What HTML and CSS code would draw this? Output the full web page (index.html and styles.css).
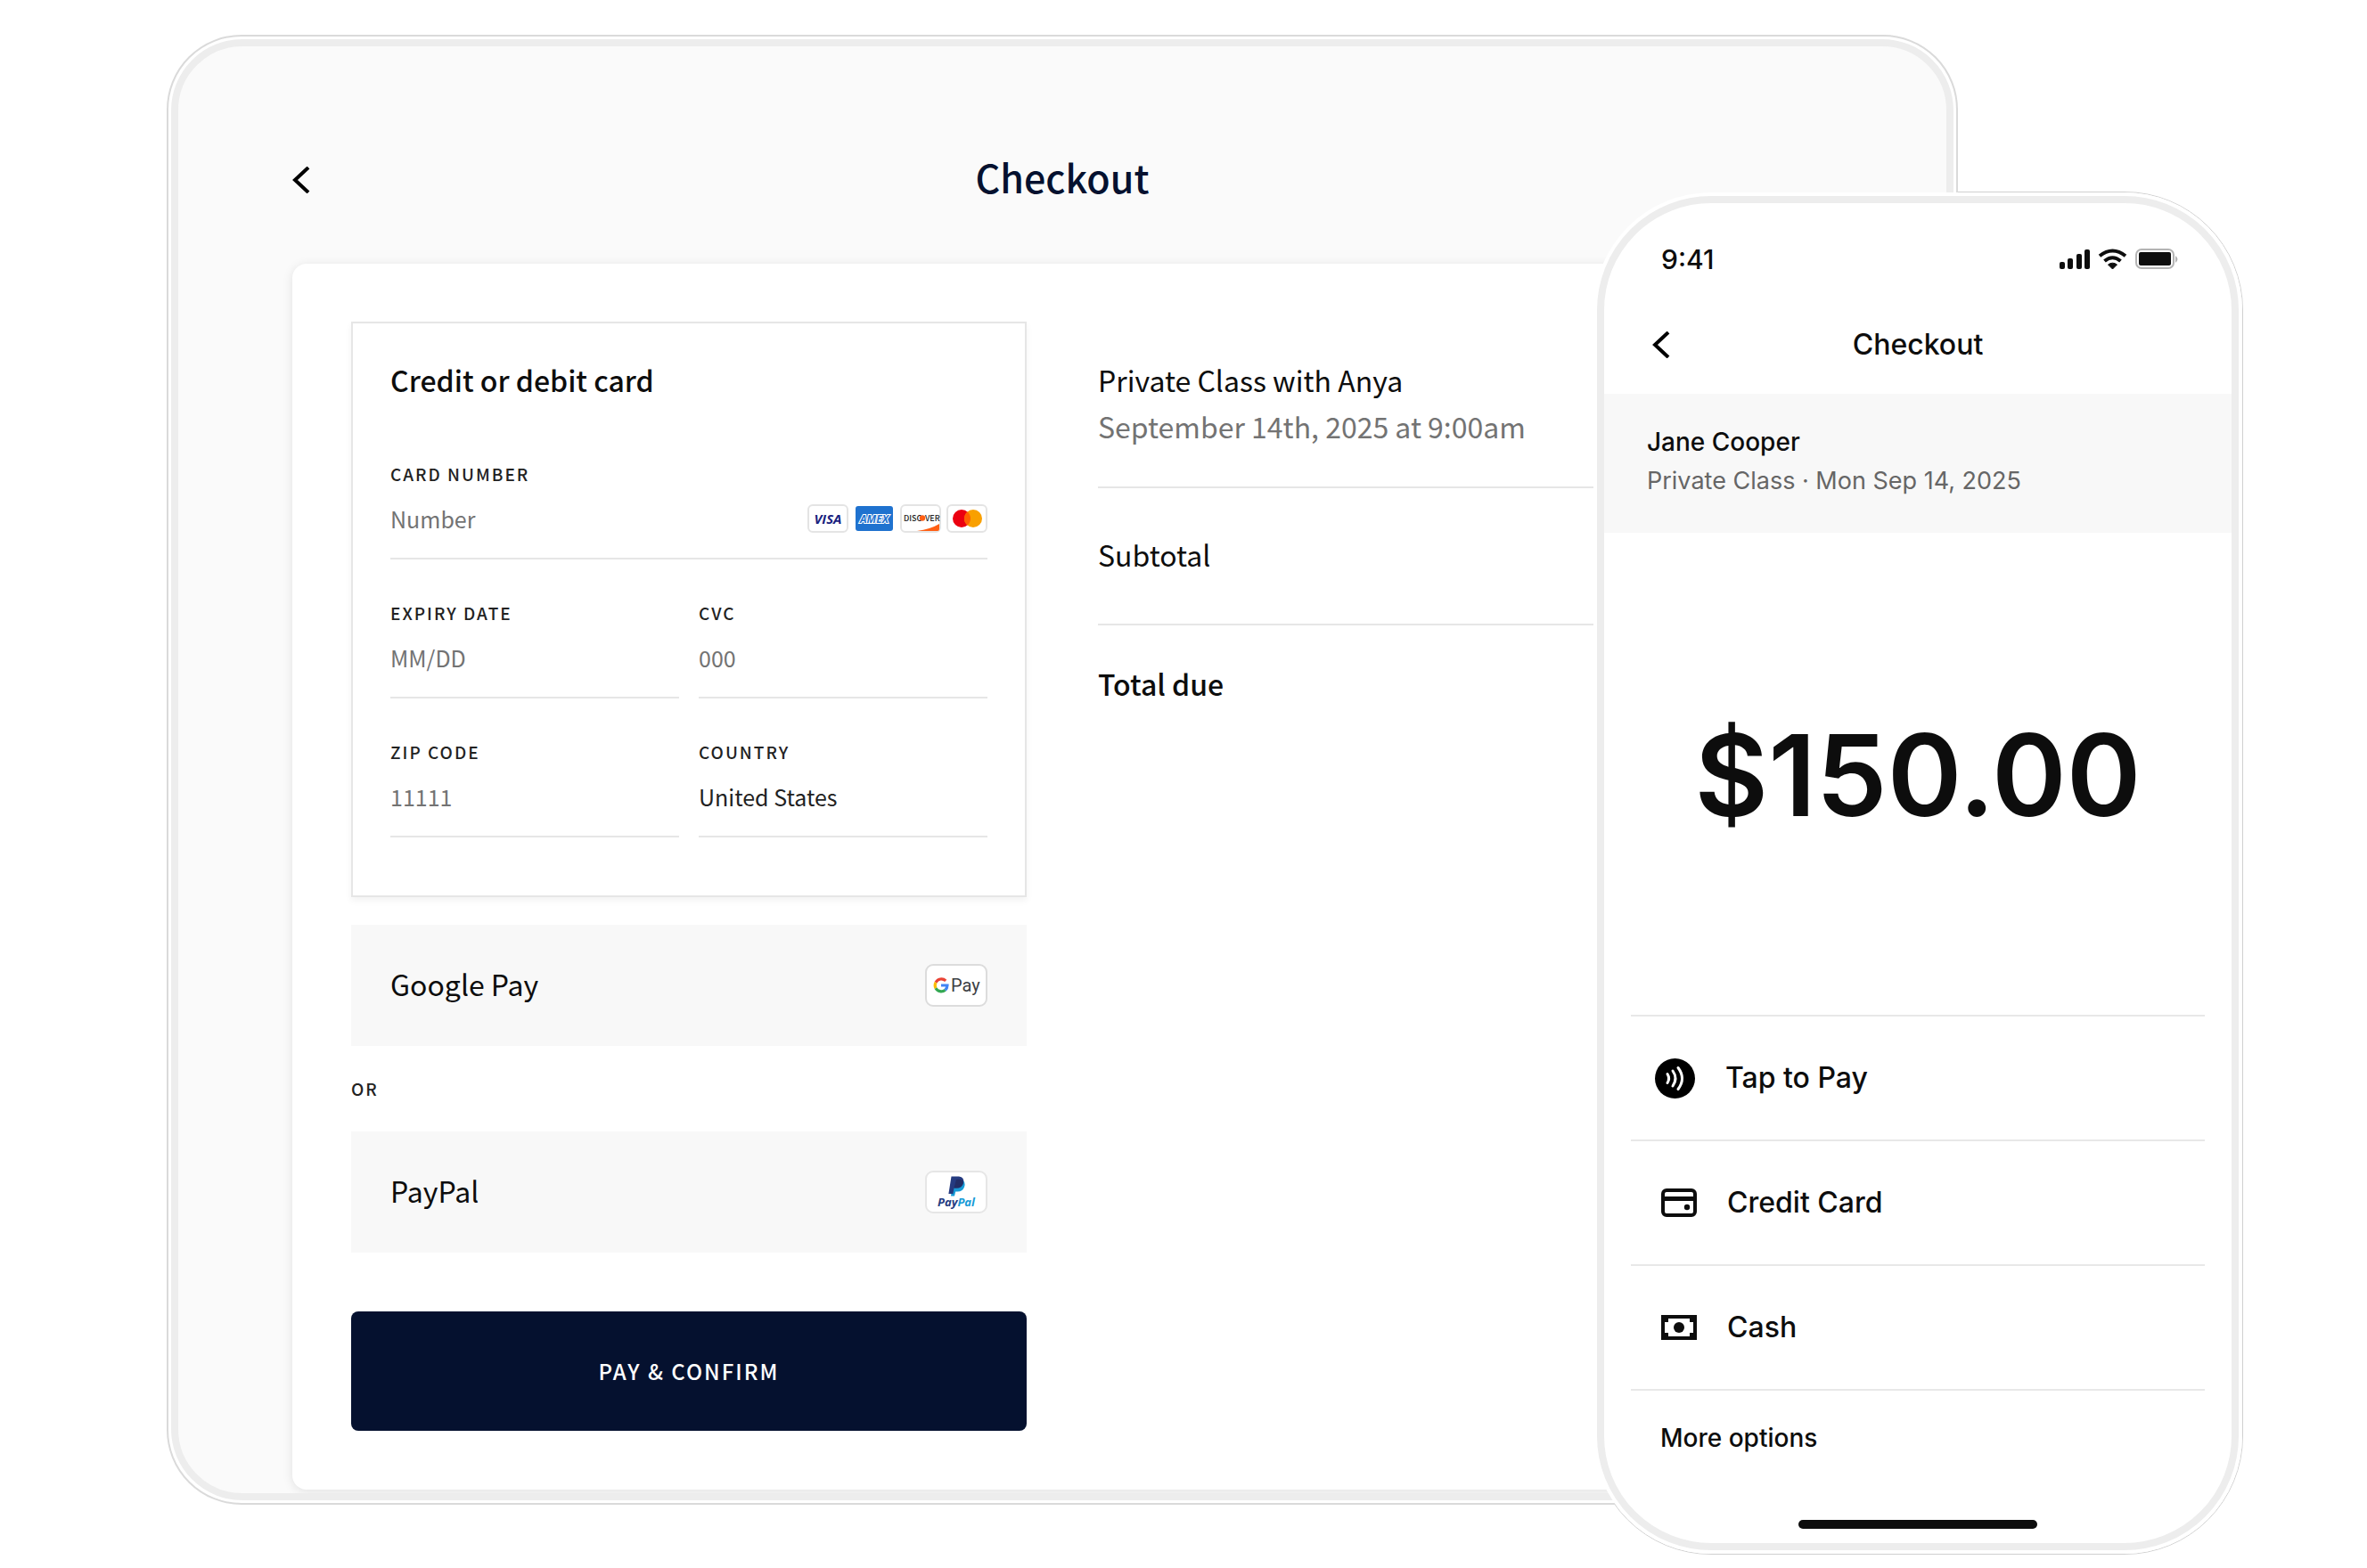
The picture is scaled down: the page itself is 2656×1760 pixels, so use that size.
FILE: index.html
```html
<!DOCTYPE html>
<html lang="en">
<head>
<meta charset="utf-8">
<meta name="viewport" content="width=device-width, initial-scale=1">
<title>Checkout</title>
<link rel="stylesheet" href="styles.css">
</head>
<body>
<main class="scene">
  <section class="tablet" aria-label="Tablet checkout">
    <div class="tablet-screen">
      <header class="tablet-header">
        <button class="back" type="button" aria-label="Back">
          <svg width="20" height="30" viewBox="0 0 20 30"><path d="M18 1 3 15l15 14" fill="none" stroke="#000" stroke-width="4"/></svg>
        </button>
        <h1 class="tablet-title">Checkout</h1>
      </header>
      <form class="card">
        <div class="payment">
          <fieldset class="card-form">
            <legend class="card-form-title">Credit or debit card</legend>
            <div class="fields">
              <div class="field field-wide">
                <label class="label" for="number">CARD NUMBER</label>
                <div class="control">
                  <input class="input" id="number" type="text" placeholder="Number">
                  <span class="brands">
                    <svg width="46" height="32" viewBox="0 0 46 32" role="img" aria-label="Visa"><rect x="1" y="1" width="44" height="30" rx="5" fill="#fff" stroke="#e4e4e4" stroke-width="2"/><text x="23" y="22" class="logo-visa" text-anchor="middle">VISA</text></svg>
                    <svg width="46" height="32" viewBox="0 0 46 32" role="img" aria-label="American Express"><rect x="2" y="2" width="42" height="28" rx="3" fill="#1f72cf"/><text x="23" y="21" class="logo-amex" text-anchor="middle">AMEX</text></svg>
                    <svg width="46" height="32" viewBox="0 0 46 32" role="img" aria-label="Discover"><rect x="1" y="1" width="44" height="30" rx="5" fill="#fff" stroke="#e4e4e4" stroke-width="2"/><path d="M19 30Q34 28 44 22v6q0 2-2 2z" fill="#ff5f14"/><text x="4" y="19" class="logo-discover">DISC</text><circle cx="25" cy="15.500" r="3.200" fill="#ff5f14"/><text x="28" y="19" class="logo-discover">VER</text></svg>
                    <svg width="46" height="32" viewBox="0 0 46 32" role="img" aria-label="Mastercard"><rect x="1" y="1" width="44" height="30" rx="5" fill="#fff" stroke="#e4e4e4" stroke-width="2"/><circle cx="17" cy="16" r="10" fill="#eb0010"/><circle cx="30" cy="16" r="10" fill="#f9a000"/><path d="M23.500 8.400a10 10 0 0 1 0 15.200a10 10 0 0 1 0-15.200z" fill="#ff6000"/></svg>
                  </span>
                </div>
              </div>
              <div class="field">
                <label class="label" for="expiry">EXPIRY DATE</label>
                <div class="control"><input class="input" id="expiry" type="text" placeholder="MM/DD"></div>
              </div>
              <div class="field">
                <label class="label" for="cvc">CVC</label>
                <div class="control"><input class="input" id="cvc" type="text" placeholder="000"></div>
              </div>
              <div class="field">
                <label class="label" for="zip">ZIP CODE</label>
                <div class="control"><input class="input" id="zip" type="text" placeholder="11111"></div>
              </div>
              <div class="field">
                <label class="label" for="country">COUNTRY</label>
                <div class="control"><select class="input" id="country"><option>United States</option></select></div>
              </div>
            </div>
          </fieldset>
          <button class="option" type="button">
            <span class="option-name">Google Pay</span>
            <svg width="70" height="48" viewBox="0 0 70 48" aria-hidden="true">
              <rect x="1" y="1" width="68" height="46" rx="8" fill="#fff" stroke="#dcdcdc" stroke-width="2"/>
              <g fill="none" stroke-width="3.200">
                <path d="M23.200 18.900A7 7 0 0 0 12 20.800" stroke="#ea4335"/>
                <path d="M12 20.800a7 7 0 0 0 0 6.400" stroke="#fbbc04"/>
                <path d="M12 27.200a7 7 0 0 0 10.600 2" stroke="#34a853"/>
                <path d="M22.600 29.200a7 7 0 0 0 2.400-5.200h-7" stroke="#4285f4"/>
              </g>
              <text x="29" y="31" class="logo-gpay">Pay</text>
            </svg>
          </button>
          <p class="or">OR</p>
          <button class="option" type="button">
            <span class="option-name">PayPal</span>
            <svg width="70" height="48" viewBox="0 0 70 48" aria-hidden="true">
              <rect x="1" y="1" width="68" height="46" rx="8" fill="#fff" stroke="#e6e6e6" stroke-width="2"/>
              <path d="M31.500 10H41q5 2 3 8.500-2 5-7.500 5h-2.300L33 28.500h-4z" fill="#179bd7"/>
              <path d="M29.500 6.500H38q6.500.500 5 7.500-1.500 5.500-7.500 5.500h-3L31.400 26h-5z" fill="#253b80"/>
              <path d="M35 10q8-1 8 3.500-1.500 6-7.500 6h-3z" fill="#222d65"/>
              <text x="14" y="40" class="logo-paypal"><tspan fill="#253b80">Pay</tspan><tspan fill="#179bd7">Pal</tspan></text>
            </svg>
          </button>
          <button class="confirm" type="submit">PAY &amp; CONFIRM</button>
        </div>
        <div class="summary">
          <div class="summary-row summary-item">
            <p>Private Class with Anya</p>
            <p class="muted">September 14th, 2025 at 9:00am</p>
          </div>
          <p class="summary-row summary-subtotal">Subtotal</p>
          <p class="summary-total">Total due</p>
        </div>
      </form>
    </div>
  </section>

  <section class="phone" aria-label="Phone checkout">
    <div class="phone-screen">
      <div class="status">
        <span>9:41</span>
        <svg width="136" height="24" viewBox="0 0 136 24" aria-hidden="true">
          <g fill="#0d0d0d">
            <rect x="1" y="15" width="6" height="8" rx="2"/><rect x="10" y="11" width="6" height="12" rx="2"/><rect x="20" y="6" width="6" height="17" rx="2"/><rect x="29" y="1" width="6" height="22" rx="2"/>
            <path d="M60.500 23l-5-5q5-3.600 10 0z" stroke="#0d0d0d" stroke-linejoin="round"/>
            <rect x="90" y="4" width="36" height="15" rx="2"/>
          </g>
          <path d="M46 8.200q14.500-11.500 29 0M51.500 14q9-7.600 18 0" fill="none" stroke="#0d0d0d" stroke-width="4"/>
          <rect x="87" y="1" width="42" height="21" rx="6" fill="none" stroke="#b4b4b4" stroke-width="2"/>
          <path d="M131 8q5 4 0 8z" fill="#b4b4b4"/>
        </svg>
      </div>
      <header class="phone-header">
        <button class="back" type="button" aria-label="Back">
          <svg width="20" height="30" viewBox="0 0 20 30"><path d="M18 1 3 15l15 14" fill="none" stroke="#000" stroke-width="4"/></svg>
        </button>
        <h2 class="phone-title">Checkout</h2>
      </header>
      <div class="client">
        <p class="client-name">Jane Cooper</p>
        <p class="client-info">Private Class · Mon Sep 14, 2025</p>
      </div>
      <p class="amount">$150.00</p>
      <ul class="methods">
        <li><button class="method method-tap" type="button">
          <svg width="45" height="45" viewBox="0 0 45 45" aria-hidden="true"><circle cx="22.500" cy="22.500" r="22.500" fill="#000"/><path d="M14 17.500q3.200 5 0 10M20 14q6 8.500 0 17M26 10.500q9 12 0 24" fill="none" stroke="#fff" stroke-width="3" stroke-linecap="round"/></svg>
          Tap to Pay</button></li>
        <li><button class="method" type="button">
          <svg width="40" height="32" viewBox="0 0 40 32" aria-hidden="true"><rect x="2" y="2" width="36" height="28" rx="4" fill="none" stroke="#0d0d0d" stroke-width="4"/><path d="M2 11.500h36" stroke="#0d0d0d" stroke-width="5"/><circle cx="29" cy="21" r="3.200" fill="#0d0d0d"/></svg>
          Credit Card</button></li>
        <li><button class="method" type="button">
          <svg width="40" height="28" viewBox="0 0 40 28" aria-hidden="true"><path d="M0 0h40v28H0zM8 4v4H4v12h4v4h24v-4h4V8h-4V4z" fill="#0d0d0d" fill-rule="evenodd"/><circle cx="20" cy="14" r="6" fill="#0d0d0d"/></svg>
          Cash</button></li>
      </ul>
      <button class="more" type="button">More options</button>
      <div class="home-bar"></div>
    </div>
  </section>
</main>
</body>
</html>
```
FILE: styles.css
```css
* {
  box-sizing: border-box;
  margin: 0;
}

body {
  background: #fff;
  color: #0d0d0d;
}

button,
input,
select {
  font: inherit;
  color: inherit;
  background: none;
  border: 0;
  padding: 0;
  border-radius: 0;
}

ul {
  list-style: none;
  padding: 0;
}

svg {
  display: block;
  flex: none;
}

.scene {
  isolation: isolate;
  display: grid;
  grid-template-columns: minmax(0, 1fr) 409px 319px;
  align-items: start;
  padding: 39px 140px 16px 187px;
}

.tablet {
  grid-area: 1 / 1 / 2 / 3;
  padding: 3px;
  border: 2px solid #dadada;
  border-radius: 84px;
  background: #fff;
  font-family: "Noto Sans CJK SC", "Noto Sans", sans-serif;
  font-size: 32px;
  line-height: 52px;
}

.tablet-screen {
  overflow: hidden;
  padding: 120px 128px 4px;
  border: 8px solid #ededed;
  border-radius: 80px;
  background: #fafafa;
}

.tablet-header,
.phone-header {
  display: grid;
  grid-template-columns: 20px minmax(0, 1fr) 20px;
  align-items: center;
}

.tablet-header {
  padding-bottom: 64px;
}

.tablet-title {
  padding-bottom: 8px;
  font-size: 43px;
  font-weight: 500;
  line-height: 52px;
  text-align: center;
  color: #05112f;
}

.card {
  display: grid;
  grid-template-columns: repeat(2, minmax(0, 1fr));
  gap: 80px;
  padding: 65px 66px 66px;
  border-radius: 16px;
  background: #fff;
  box-shadow: 0 2px 12px rgba(0, 0, 0, 0.1);
}

.payment {
  display: flex;
  flex-direction: column;
}

.card-form {
  min-width: 0;
  padding: 39px 42px 65px;
  border: 2px solid #e6e6e6;
  box-shadow: 0 4px 8px rgba(0, 0, 0, 0.05);
}

.card-form-title {
  float: left;
  width: 100%;
  padding: 0;
  margin-bottom: 70px;
  font-weight: 500;
  line-height: 48px;
}

.fields {
  clear: both;
  display: grid;
  grid-template-columns: repeat(2, minmax(0, 1fr));
  gap: 48px 22px;
}

.field-wide {
  grid-column: 1 / -1;
}

.label {
  display: block;
  font-size: 19px;
  font-weight: 500;
  line-height: 24px;
  letter-spacing: 2px;
  color: #222;
}

.control {
  display: flex;
  align-items: center;
  padding: 18px 0 24px;
  border-bottom: 2px solid #e6e6e6;
}

.input {
  flex: 1;
  min-width: 0;
  height: 40px;
  font-size: 25px;
  line-height: 40px;
  color: #222;
  appearance: none;
}

.input::placeholder {
  color: #737373;
  opacity: 1;
}

.brands {
  display: flex;
  gap: 6px;
}

.logo-visa {
  font: italic 700 15px "Open Sans", sans-serif;
  fill: #1a1f80;
}

.logo-amex {
  font: italic 700 12px "Open Sans", sans-serif;
  fill: #1f72cf;
  stroke: #fff;
  stroke-width: 2px;
  paint-order: stroke;
}

.logo-discover {
  font: 500 9px "Noto Sans CJK SC", sans-serif;
  fill: #222;
}

.logo-gpay {
  font: 400 20px Roboto, sans-serif;
  fill: #3c4043;
}

.logo-paypal {
  font: italic 700 13px "Open Sans", sans-serif;
}

.option {
  display: flex;
  align-items: center;
  justify-content: space-between;
  height: 136px;
  padding: 0 44px;
  background: #f8f8f8;
}

.option-name {
  padding-bottom: 4px;
}

.card-form + .option {
  margin-top: 31px;
}

.or {
  margin: 36px 0;
  font-size: 19px;
  font-weight: 500;
  line-height: 24px;
  letter-spacing: 2px;
  color: #222;
}

.confirm {
  height: 134px;
  margin-top: 66px;
  border-radius: 8px;
  background: #05112f;
  color: #fff;
  font-size: 24px;
  font-weight: 500;
  letter-spacing: 2px;
}

.summary {
  padding-top: 39px;
}

.summary-row {
  border-bottom: 2px solid #e6e6e6;
}

.summary-item {
  padding-bottom: 42px;
}

.muted {
  color: #737373;
}

.summary-subtotal {
  padding: 48px 0 52px;
}

.summary-total {
  padding-top: 39px;
  font-weight: 500;
}

.phone {
  grid-area: 1 / 2 / 2 / 4;
  position: relative;
  margin-top: 177px;
  padding: 4px;
  border-radius: 132px;
  background: #fff;
  font-family: Inter, "Liberation Sans", sans-serif;
  font-size: 28px;
  font-weight: 500;
  line-height: 44px;
}

/* hairline that shows only where the phone is clear of the tablet */
.phone::before {
  content: "";
  position: absolute;
  z-index: -1;
  inset: -1px;
  border: 1px solid #d0d0d0;
  border-radius: 133px;
}

.phone-screen {
  display: flex;
  flex-direction: column;
  padding-bottom: 16px;
  border: 8px solid #ededed;
  border-radius: 128px;
  background: #fff;
}

.status {
  display: flex;
  align-items: center;
  justify-content: space-between;
  padding: 43px 58px 21px 64px;
  font-size: 30px;
  line-height: 40px;
}

.phone-header {
  height: 110px;
  padding: 0 54px;
}

.phone-title {
  font-size: 32px;
  font-weight: 500;
  text-align: center;
}

.client {
  padding: 32px 48px 36px;
  background: #f8f8f8;
}

.client-info {
  font-size: 27px;
  font-weight: 400;
  color: #666;
}

.amount {
  padding: 192px 0 189px;
  font-size: 127px;
  font-weight: 600;
  line-height: 160px;
  text-align: center;
}

.methods {
  margin: 0 30px;
  border-bottom: 2px solid #e8e8e8;
}

.method {
  display: flex;
  align-items: center;
  gap: 34px;
  width: 100%;
  height: 140px;
  padding: 0 34px;
  border-top: 2px solid #e8e8e8;
  font-size: 32px;
}

.method-tap {
  padding-left: 27px;
}

.more {
  align-self: flex-start;
  margin: 31px 63px 70px;
}

.home-bar {
  align-self: center;
  width: 268px;
  height: 10px;
  border-radius: 5px;
  background: #0d0d0d;
}
```
